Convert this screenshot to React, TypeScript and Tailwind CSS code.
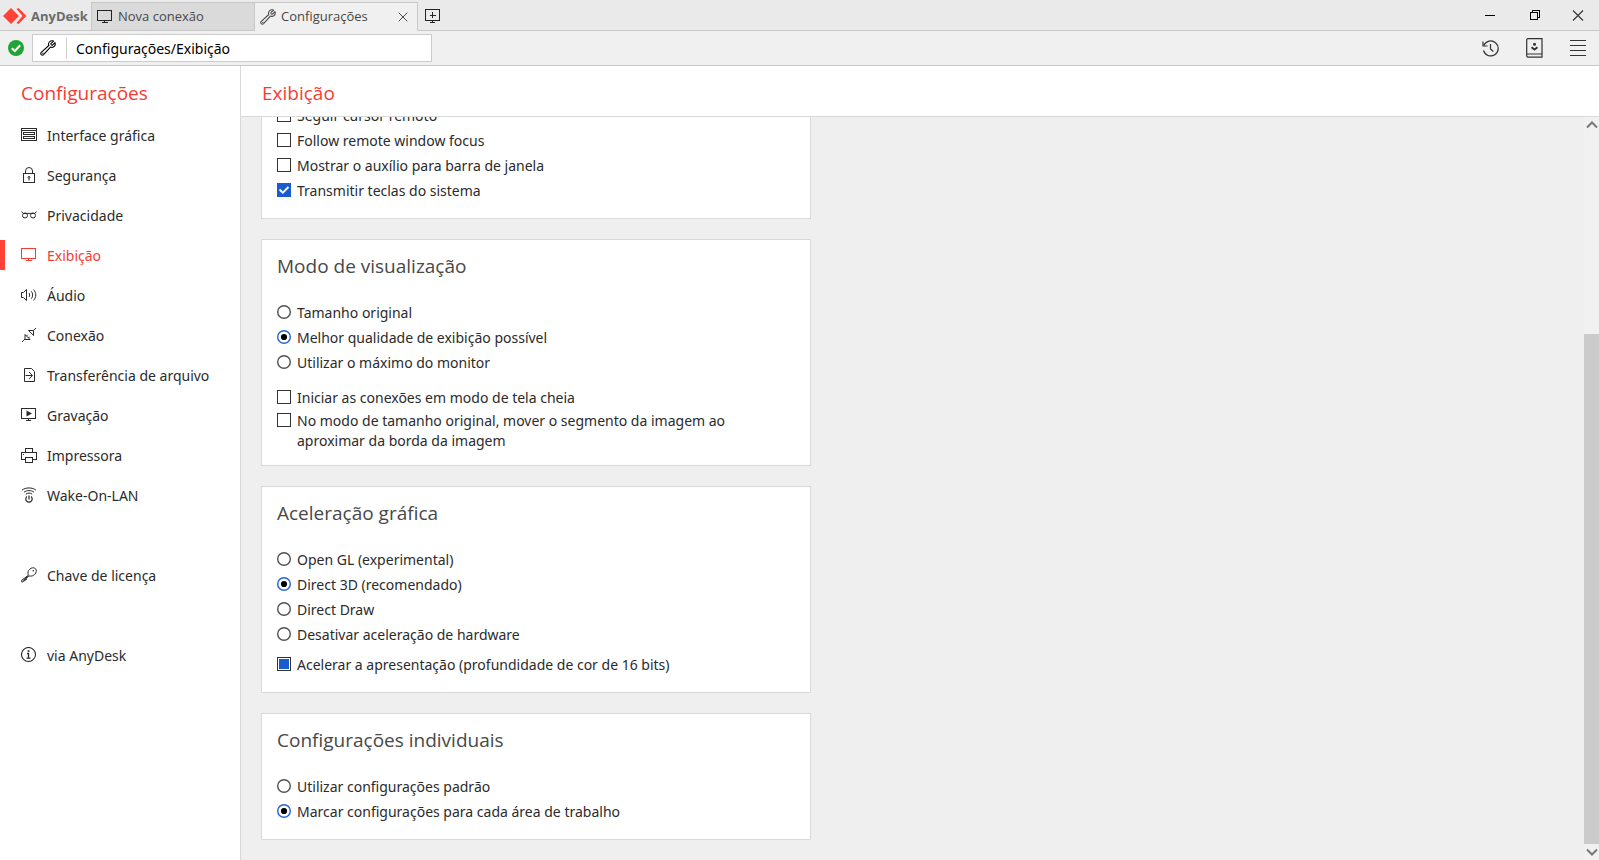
import { useEffect, useRef, type ReactNode } from 'react';

type IconProps = { children: ReactNode; size?: string; crisp?: boolean; box?: string };

function Icon({ children, size = 'size-4', crisp = false, box = '0 0 16 16' }: IconProps) {
  return (
    <svg
      viewBox={box}
      className={`${size} shrink-0`}
      fill="none"
      stroke="currentColor"
      strokeWidth="1"
      shapeRendering={crisp ? 'crispEdges' : 'auto'}
      aria-hidden="true"
    >
      {children}
    </svg>
  );
}

const WrenchIcon = () => (
  <Icon>
    <path
      d="M13.6 1.1 10.9 3.7 11.2 5 12.4 5.2 15 2.6C15.6 4.5 15 6 13.8 6.8 12.7 7.5 11.4 7.5 10.4 7.1L3.6 14.6C2.9 15.3 1.9 15.3 1.2 14.7 .5 14 .5 13 1.3 12.3L8.8 5.5C8.3 4.3 8.5 3 9.4 2 10.5.8 12.1.5 13.6 1.1Z"
      strokeWidth="1.1"
      strokeLinejoin="round"
    />
    <path d="M2.6 13.3h.6" strokeWidth="1" strokeLinecap="round" />
  </Icon>
);

const MonitorIcon = () => (
  <Icon crisp>
    <rect x="0.5" y="1.5" width="14" height="10" />
    <path d="M7.5 12v2M5 13.5h6" />
  </Icon>
);

const InterfaceIcon = () => (
  <Icon crisp>
    <rect x="0.5" y="1.5" width="15" height="12" />
    <path d="M0 3.5h16" />
    <rect x="2.5" y="5.5" width="11" height="2" />
    <rect x="2.5" y="9.5" width="11" height="2" />
  </Icon>
);

const LockIcon = () => (
  <Icon>
    <rect x="2.5" y="6.5" width="11" height="9" />
    <path d="M4.5 6.5V4a3.5 3.5 0 0 1 7 0v2.5" />
    <circle cx="8" cy="10.3" r="0.9" />
    <path d="M8 11v2.5" />
  </Icon>
);

const GlassesIcon = () => (
  <Icon>
    <circle cx="4" cy="8.5" r="2.5" />
    <circle cx="12" cy="8.5" r="2.5" />
    <path d="M.4 4.6 2.4 6.4h11.2l2-1.8" />
  </Icon>
);

const AudioIcon = () => (
  <Icon>
    <path d="M.5 5.5h2L5.5 2.5v11L2.500 10.500h-2z" />
    <path d="M8 6c.9 1.200.9 2.800 0 4M10.300 4.300c1.800 2 1.800 5.400 0 7.400M12.500 2.600c3 3 3 7.800 0 10.800" />
  </Icon>
);

const PlugIcon = () => (
  <Icon>
    <path d="M1 15 4 12M4 7.500v5h5zM5.500 9 6.800 7.700M7.500 11 8.800 9.700M15 1 12.500 3.500M7.500 3.500h5v5z" />
  </Icon>
);

const FileIcon = () => (
  <Icon>
    <path d="M3.500 1.500h7l3 3v10h-10z" />
    <path d="M4.500 8.500h6.500M8 5l3.500 3.500L8 12" />
  </Icon>
);

const RecordIcon = () => (
  <Icon>
    <rect x="0.500" y="1.500" width="14" height="10" />
    <path d="M7.500 12v2M5 13.500h5" />
    <path d="M5.500 3.500v6L11 6.500z" fill="currentColor" stroke="none" />
  </Icon>
);

const PrinterIcon = () => (
  <Icon crisp>
    <path d="M4.500 6V1.500h7V6M4.500 12.500h-4v-7h15v7h-4" />
    <rect x="4.500" y="10.500" width="7" height="5" />
    <path d="M2 7.500h1" />
  </Icon>
);

const WakeIcon = () => (
  <Icon>
    <path d="M1 3.200C4.500.2 11.500.2 15 3.200M3 5.200C5.800 3 10.200 3 13 5.200M4.800 7.200C6.500 5.700 9.500 5.700 11.200 7.200" />
    <path d="M6 9.500a3.200 3.200 0 1 0 4 0M8 8.500v4" strokeWidth="1.200" />
  </Icon>
);

const KeyIcon = () => (
  <Icon>
    <path d="M7.300 8.300C6.500 5.800 7 3.700 8.700 2.200 10.500.5 13 .3 14.500 1.700 15.800 3.200 15.500 5.700 13.800 7.400 12.200 8.900 10.200 9.500 7.900 8.900L5.500 11.300V12.500H4.200V13.700H3L1.800 15H.7v-1.700z" />
    <path d="M2 13.700 7.200 9" />
    <circle cx="12.300" cy="3.800" r="0.800" fill="currentColor" stroke="none" />
  </Icon>
);

const InfoIcon = () => (
  <Icon>
    <circle cx="7.500" cy="7.500" r="7" strokeWidth="1.100" />
    <path d="M6 6.500h1.500V11M5.500 11.200h4" strokeWidth="1.300" />
    <path d="M6.700 4h1.700" strokeWidth="1.700" />
  </Icon>
);

const navItems = [
  { label: 'Interface gráfica', icon: <InterfaceIcon /> },
  { label: 'Segurança', icon: <LockIcon /> },
  { label: 'Privacidade', icon: <GlassesIcon /> },
  { label: 'Exibição', icon: <MonitorIcon />, active: true },
  { label: 'Áudio', icon: <AudioIcon /> },
  { label: 'Conexão', icon: <PlugIcon /> },
  { label: 'Transferência de arquivo', icon: <FileIcon /> },
  { label: 'Gravação', icon: <RecordIcon /> },
  { label: 'Impressora', icon: <PrinterIcon /> },
  { label: 'Wake-On-LAN', icon: <WakeIcon /> },
];

function NavLink({ label, icon, active = false }: { label: string; icon: ReactNode; active?: boolean }) {
  return (
    <a
      href="#"
      aria-current={active ? 'page' : undefined}
      className={`flex h-[30px] items-center gap-[10px] border-l-[5px] pl-4 text-sm ${
        active ? 'border-[#ff4238] text-[#f53c33]' : 'border-transparent text-[#2b2b2b]'
      }`}
    >
      {icon}
      <span className="pt-[2px]">{label}</span>
    </a>
  );
}

type CheckProps = { label: string; checked?: boolean; mixed?: boolean; multiline?: boolean };

function Check({ label, checked = false, mixed = false, multiline = false }: CheckProps) {
  const ref = useRef<HTMLInputElement>(null);
  useEffect(() => {
    if (ref.current) ref.current.indeterminate = mixed;
  }, [mixed]);
  return (
    <label className={`flex gap-[6px] leading-5 ${multiline ? '-mb-[2px] items-start pt-[2px]' : 'h-[25px] items-center'}`}>
      <span className={`grid shrink-0 ${multiline ? 'pt-[2px]' : ''}`}>
        <input
          ref={ref}
          type="checkbox"
          defaultChecked={checked}
          className="peer col-start-1 row-start-1 size-[14px] appearance-none border border-[#333] bg-white checked:border-[#1a5bd0] checked:bg-[#1a5bd0] indeterminate:bg-[#1a5bd0] indeterminate:shadow-[inset_0_0_0_1px_white]"
        />
        <svg
          viewBox="0 0 14 14"
          fill="none"
          stroke="white"
          strokeWidth="1.800"
          className="pointer-events-none col-start-1 row-start-1 hidden size-[14px] peer-checked:block"
          aria-hidden="true"
        >
          <path d="M2.500 6.500 5.800 9.700 11.500 4" />
        </svg>
      </span>
      <span className={multiline ? '' : 'pt-[2px]'}>{label}</span>
    </label>
  );
}

function Radio({ name, label, checked = false }: { name: string; label: string; checked?: boolean }) {
  return (
    <label className="flex h-[25px] items-center gap-[6px] leading-5">
      <span className="grid shrink-0 text-[#505050] has-checked:text-[#2563d4]">
        <input
          type="radio"
          name={name}
          defaultChecked={checked}
          className="peer col-start-1 row-start-1 size-[14px] appearance-none rounded-full"
        />
        <svg
          viewBox="0 0 14 14"
          className="pointer-events-none col-start-1 row-start-1 size-[14px] [&>.dot]:hidden peer-checked:[&>.dot]:block"
          aria-hidden="true"
        >
          <circle cx="7" cy="7" r="6.300" fill="none" stroke="currentColor" strokeWidth="1.400" />
          <circle className="dot" cx="7" cy="7" r="3.100" fill="black" />
        </svg>
      </span>
      <span className="pt-[2px]">{label}</span>
    </label>
  );
}

function Card({ title, children }: { title?: string; children: ReactNode }) {
  return (
    <section className="w-full max-w-[550px] shrink-0 border border-[#d9d9d9] bg-white px-[15px] pt-[11px] pb-4 text-sm text-[#2b2b2b]">
      {title && (
        <h2 className="mb-[18px] font-['Open_Sans',sans-serif] text-[19px] leading-[30px] text-[#484848]">{title}</h2>
      )}
      {children}
    </section>
  );
}

function TitleBar() {
  return (
    <header className="flex h-[31px] shrink-0 items-stretch bg-[#eaeaea] font-['Open_Sans',sans-serif] text-[13px] text-[#484848] shadow-[inset_0_-1px_0_#c8c8c8]">
      <div className="flex w-[91px] shrink-0 items-center gap-1 pl-[3px]">
        <svg viewBox="0 0 24 16" className="h-4 w-6 shrink-0" aria-hidden="true">
          <path d="M8 0 16 8 8 16 0 8z" fill="#ff4238" />
          <path d="M13.500 1 15.500 0 23.500 8 15.500 16 13.500 15 19.500 8z" fill="#ff4238" />
        </svg>
        <span className="pt-[2px] font-bold text-[#6b6b6b]">AnyDesk</span>
      </div>
      <nav className="flex items-stretch pt-[2px]" aria-label="Abas">
        <button
          type="button"
          className="flex w-[163px] items-center gap-[5px] border border-r-0 border-[#c8c8c8] bg-[#dadada] pl-[5px]"
        >
          <span className="flex text-[#222]">
            <MonitorIcon />
          </span>
          Nova conexão
        </button>
        <div className="flex w-[164px] items-center border border-b-0 border-[#c8c8c8] bg-[#f0f0f0] pr-[9px] pl-[5px]">
          <button type="button" className="flex flex-1 items-center gap-[5px]">
            <WrenchIcon />
            Configurações
          </button>
          <button type="button" aria-label="Fechar aba">
            <Icon size="size-[10px]" box="0 0 10 10">
              <path d="M.7.700 9.300 9.300M9.300.700.700 9.300" />
            </Icon>
          </button>
        </div>
      </nav>
      <button type="button" aria-label="Nova aba" className="ml-[7px] text-[#222]">
        <Icon crisp>
          <rect x="0.500" y="1.500" width="14" height="11" />
          <path d="M7.500 4v6M4.500 7.500h6M7.500 13v1M5 14.500h5" />
        </Icon>
      </button>
      <div className="ml-auto flex items-center gap-7 pr-[13px] text-black">
        <button type="button" aria-label="Minimizar">
          <Icon crisp>
            <path d="M3 7.500h10" />
          </Icon>
        </button>
        <button type="button" aria-label="Restaurar">
          <Icon crisp>
            <path d="M4.500 4.500h7v7h-7zM6.500 4V2.500h7v7H12" />
          </Icon>
        </button>
        <button type="button" aria-label="Fechar" className="text-[#333]">
          <Icon>
            <path d="M3 2.500 13 12.500M13 2.500 3 12.500" strokeWidth="1.100" />
          </Icon>
        </button>
      </div>
    </header>
  );
}

function Toolbar() {
  return (
    <div className="flex h-[35px] shrink-0 items-center border-b border-[#c8c8c8] bg-[#f0f0f0] text-[#333]">
      <svg viewBox="0 0 16 16" className="mr-2 ml-2 size-4 shrink-0" aria-hidden="true">
        <circle cx="8" cy="8" r="8" fill="#22a435" />
        <path d="M3.800 8.200 6.800 11 12.200 5.300" fill="none" stroke="white" strokeWidth="2" />
      </svg>
      <div className="flex h-7 w-[400px] items-center border border-[#ccc] bg-white pl-[7px] text-black">
        <WrenchIcon />
        <input
          type="text"
          aria-label="Endereço"
          defaultValue="Configurações/Exibição"
          className="ml-[10px] h-[22px] min-w-0 flex-1 border-l border-[#d0d0d0] pl-[9px] text-sm outline-none"
        />
      </div>
      <div className="ml-auto flex items-center gap-[27px] pr-[13px]">
        <button type="button" aria-label="Histórico">
          <Icon size="size-[17px]" box="0 0 17 17">
            <path d="M1.800 5.500A7.500 7.500 0 1 1 1.500 10.500" strokeWidth="1.200" />
            <path d="M1 1.500V6h4.500M8.500 4v5l2.800 2.500" strokeWidth="1.200" />
          </Icon>
        </button>
        <button type="button" aria-label="Livro de endereços">
          <Icon size="h-5 w-[17px]" box="0 0 17 20">
            <path d="M16 .6H2.500A1.700 1.700 0 0 0 .7 2.300v15.200a1.700 1.700 0 0 0 1.800 1.700H16zM1 16h15" strokeWidth="1.200" />
            <circle cx="8.500" cy="6.300" r="1.500" fill="currentColor" stroke="none" />
            <path d="M5.500 9.300 8.500 11.500 11.500 9.300" strokeWidth="1.900" />
          </Icon>
        </button>
        <button type="button" aria-label="Menu">
          <Icon crisp>
            <path d="M0 .5h16M0 5.500h16M0 10.500h16M0 15.500h16" />
          </Icon>
        </button>
      </div>
    </div>
  );
}

function ScrollBar() {
  return (
    <div className="flex w-[15px] shrink-0 flex-col bg-[#f1f1f1] text-[#777]" aria-hidden="true">
      <div className="flex h-4 items-center justify-center">
        <Icon size="h-2 w-3" box="0 0 12 8">
          <path d="M1 6.500 6 1.500 11 6.500" strokeWidth="2" />
        </Icon>
      </div>
      <div className="grow-[201]" />
      <div className="grow-[510] bg-[#cbcbcb]" />
      <div className="flex h-4 items-center justify-center">
        <Icon size="h-2 w-3" box="0 0 12 8">
          <path d="M1 1.500 6 6.500 11 1.500" strokeWidth="2" />
        </Icon>
      </div>
    </div>
  );
}

export default function App() {
  return (
    <div className="flex h-screen flex-col overflow-hidden bg-white font-['Noto_Sans','Open_Sans',sans-serif]">
      <TitleBar />
      <Toolbar />
      <div className="flex min-h-0 flex-1">
        <aside className="w-[241px] shrink-0 border-r border-[#d9d9d9] bg-white pt-3">
          <h1 className="mb-3 pl-[21px] font-['Open_Sans',sans-serif] text-[19px] leading-[30px] text-[#f53c33]">
            Configurações
          </h1>
          <nav className="flex flex-col gap-[10px]" aria-label="Configurações">
            {navItems.map((item) => (
              <NavLink key={item.label} {...item} />
            ))}
            <div className="mt-10">
              <NavLink label="Chave de licença" icon={<KeyIcon />} />
            </div>
            <div className="mt-10">
              <NavLink label="via AnyDesk" icon={<InfoIcon />} />
            </div>
          </nav>
        </aside>
        <main className="flex min-w-0 flex-1 flex-col bg-[#efefef]">
          <h1 className="h-[51px] shrink-0 border-b border-[#d9d9d9] bg-white pt-3 pl-[21px] font-['Open_Sans',sans-serif] text-[19px] leading-[30px] text-[#f53c33]">
            Exibição
          </h1>
          <div className="flex min-h-0 flex-1">
            <div className="flex flex-1 flex-col justify-end gap-5 overflow-hidden px-5 pb-5">
              <Card>
                <Check label="Seguir cursor remoto" />
                <Check label="Follow remote window focus" />
                <Check label="Mostrar o auxílio para barra de janela" />
                <Check label="Transmitir teclas do sistema" checked />
              </Card>
              <Card title="Modo de visualização">
                <Radio name="view" label="Tamanho original" />
                <Radio name="view" label="Melhor qualidade de exibição possível" checked />
                <Radio name="view" label="Utilizar o máximo do monitor" />
                <div className="mt-[10px] max-w-[480px]">
                  <Check label="Iniciar as conexões em modo de tela cheia" />
                  <Check
                    label="No modo de tamanho original, mover o segmento da imagem ao aproximar da borda da imagem"
                    multiline
                  />
                </div>
              </Card>
              <Card title="Aceleração gráfica">
                <Radio name="accel" label="Open GL (experimental)" />
                <Radio name="accel" label="Direct 3D (recomendado)" checked />
                <Radio name="accel" label="Direct Draw" />
                <Radio name="accel" label="Desativar aceleração de hardware" />
                <div className="mt-[5px]">
                  <Check label="Acelerar a apresentação (profundidade de cor de 16 bits)" mixed />
                </div>
              </Card>
              <Card title="Configurações individuais">
                <Radio name="individual" label="Utilizar configurações padrão" />
                <Radio name="individual" label="Marcar configurações para cada área de trabalho" checked />
              </Card>
            </div>
            <ScrollBar />
          </div>
        </main>
      </div>
    </div>
  );
}
